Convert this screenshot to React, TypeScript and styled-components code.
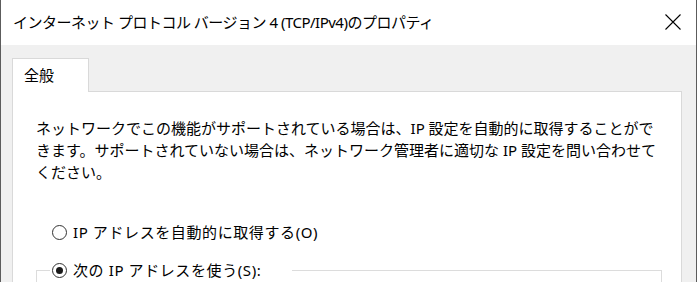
import styled, { createGlobalStyle } from "styled-components";

const GlobalStyle = createGlobalStyle`
  html, body {
    margin: 0;
    padding: 0;
    background: #4a4a4a;
  }
  * {
    box-sizing: border-box;
  }
`;

const font = `"Noto Sans", "Noto Sans CJK JP", sans-serif`;

export default function App() {
  return (
    <>
      <GlobalStyle />
      <Window>
        <TitleBar>
          <Title>インターネット プロトコル バージョン 4 (TCP/IPv4)のプロパティ</Title>
          <CloseButton aria-label="閉じる">
            <svg width="16" height="16" viewBox="0 0 16 16">
              <path d="M0.5 0.5 L15.5 15.5 M15.5 0.5 L0.5 15.5" stroke="#000" strokeWidth="1.1" fill="none" />
            </svg>
          </CloseButton>
        </TitleBar>

        <Body>
          <Tabs>
            <Tab>全般</Tab>
          </Tabs>
          <Panel>
            <Description>
              <Line>ネットワークでこの機能がサポートされている場合は、IP 設定を自動的に取得することがで</Line>
              <Line>きます。サポートされていない場合は、ネットワーク管理者に適切な IP 設定を問い合わせて</Line>
              <Line>ください。</Line>
            </Description>

            <RadioRow>
              <Radio />
              <RadioLabel>IP アドレスを自動的に取得する(O)</RadioLabel>
            </RadioRow>

            <GroupBox>
              <Legend>
                <Radio $checked />
                <RadioLabel>次の IP アドレスを使う(S):</RadioLabel>
              </Legend>
              <GroupContent />
            </GroupBox>
          </Panel>
        </Body>
      </Window>
    </>
  );
}

const Window = styled.div`
  width: 697px;
  height: 282px;
  overflow: hidden;
  border-left: 1px solid #5c5c5c;
  border-right: 1px solid #5c5c5c;
  background: #f0f0f0;
  font-family: ${font};
  color: #000;
`;

const TitleBar = styled.div`
  height: 45px;
  background: #fff;
  display: flex;
  align-items: center;
  justify-content: space-between;
  padding: 0 15px 2px 12px;
`;

const Title = styled.div`
  font-size: 15px;
  line-height: 20px;
  letter-spacing: -0.5px;
  white-space: nowrap;
`;

const CloseButton = styled.div`
  width: 16px;
  height: 16px;
  display: flex;
`;

const Body = styled.div`
  padding: 13px 14px 0 11px;
`;

const Tabs = styled.div`
  display: flex;
  position: relative;
  z-index: 1;
`;

const Tab = styled.div`
  width: 77px;
  height: 34px;
  background: #fff;
  border: 1px solid #d9d9d9;
  border-bottom: none;
  margin-bottom: -1px;
  padding: 5px 0 0 11px;
  font-size: 15px;
  line-height: 22px;
`;

const Panel = styled.div`
  background: #fff;
  border: 1px solid #d9d9d9;
  height: 300px;
  padding: 25px 19px 0 23px;
`;

const Description = styled.div`
  font-size: 15px;
  line-height: 22px;
  margin-bottom: 38px;
`;

const Line = styled.div`
  white-space: nowrap;
`;

const RadioRow = styled.div`
  display: flex;
  align-items: center;
  gap: 6px;
  height: 22px;
  margin-left: 16px;
`;

const Radio = styled.span<{ $checked?: boolean }>`
  width: 15px;
  height: 15px;
  border-radius: 50%;
  border: 1.5px solid #333;
  background: #fff;
  display: inline-flex;
  align-items: center;
  justify-content: center;
  flex-shrink: 0;
  &::after {
    content: "";
    width: 7px;
    height: 7px;
    border-radius: 50%;
    background: ${(p) => (p.$checked ? "#1a1a1a" : "transparent")};
  }
`;

const RadioLabel = styled.span`
  font-size: 15px;
  line-height: 22px;
  letter-spacing: 0.6px;
  white-space: nowrap;
`;

const GroupBox = styled.fieldset`
  margin: 16px 0 0 0;
  padding: 0;
  border: 1px solid #dcdcdc;
  min-width: 0;
`;

const Legend = styled.legend`
  display: flex;
  align-items: center;
  gap: 6px;
  height: 22px;
  margin-left: 13px;
  padding: 0 31px 0 2px;
`;

const GroupContent = styled.div`
  height: 60px;
`;
